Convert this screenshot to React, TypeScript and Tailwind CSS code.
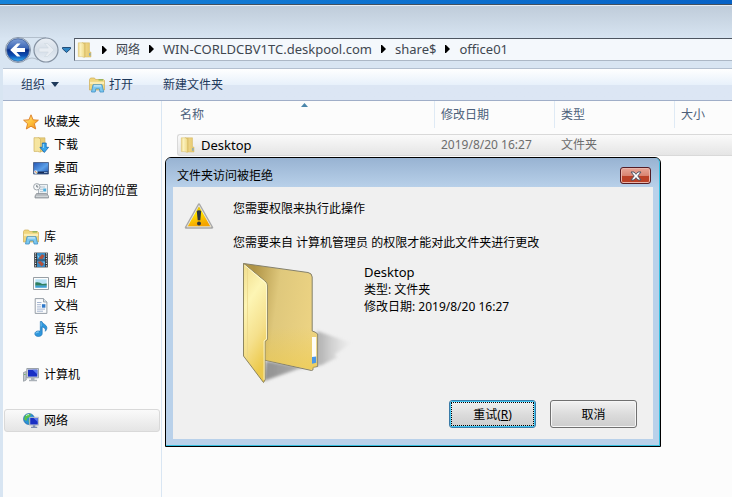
import type { ReactNode } from "react";

type IconProps = { className?: string };

function SmallFolder({ className = "h-4 w-4" }: IconProps) {
  return (
    <svg viewBox="0 0 16 16" className={className} aria-hidden="true">
      <defs>
        <linearGradient id="sf" x1="0" x2="1">
          <stop offset="0" stopColor="#eed88a" />
          <stop offset="0.35" stopColor="#fbf1bd" />
          <stop offset="1" stopColor="#efd988" />
        </linearGradient>
        <linearGradient id="sb" x1="0" x2="1">
          <stop offset="0" stopColor="#c9a94c" />
          <stop offset="0.5" stopColor="#ecd282" />
          <stop offset="1" stopColor="#e6c765" />
        </linearGradient>
      </defs>
      <path d="M5 .8h7.500V10H14v5H6z" fill="url(#sb)" stroke="#d5b865" strokeWidth="0.5" />
      <path d="M12.900 11v2.800" stroke="#5a9be0" strokeWidth="1" />
      <path d="M1.300.8h4.200L7.500 2.300v13L4.500 14.600H1.300z" fill="url(#sf)" stroke="#d8bd68" strokeWidth="0.5" />
    </svg>
  );
}

function LibraryFolder({ className = "h-4 w-4" }: IconProps) {
  return (
    <svg viewBox="0 0 16 16" className={className} aria-hidden="true">
      <path d="M.5 2.5 1.5 1h4l1 1.500h8l1 1V13H.5z" fill="#f0d67e" stroke="#cfae58" strokeWidth="0.7" />
      <path d="M1 4.800h14v2.200H1z" fill="#faedb4" />
      <path d="M9.500 2.900h4.500" stroke="#6fae4e" strokeWidth="1" />
      <path d="M2.500 15 4 7.700h9L14.700 15h-3.700l-.6-3.200H6.800L6.200 15z" fill="#7cc8f0" stroke="#3f8fc4" strokeWidth="0.8" />
      <path d="M4.800 8.900h7.400" stroke="#e2f5ff" strokeWidth="1" />
    </svg>
  );
}

function StarIcon() {
  return (
    <svg viewBox="0 0 16 16" className="h-4 w-4" aria-hidden="true">
      <defs>
        <linearGradient id="star" x1="0" y1="0" x2="1" y2="1">
          <stop offset="0" stopColor="#ffe9a0" />
          <stop offset="0.5" stopColor="#ffc23c" />
          <stop offset="1" stopColor="#f08a1c" />
        </linearGradient>
      </defs>
      <path
        d="M8 .8 10.1 5.8 15.4 6.2 11.4 9.7 12.7 15 8 12.2 3.3 15 4.6 9.7.6 6.2 5.9 5.8z"
        fill="url(#star)"
        stroke="#dc7d22"
        strokeWidth="0.9"
        strokeLinejoin="round"
      />
    </svg>
  );
}

function DownloadIcon() {
  return (
    <svg viewBox="0 0 16 16" className="h-4 w-4" aria-hidden="true">
      <path d="M5 .8h7v13.700H6z" fill="#e8cd78" stroke="#cdb062" strokeWidth="0.6" />
      <path d="M1 .7h4.500L7.500 2.200v13l-3-.8H1z" fill="#f6e5a0" stroke="#cfb25e" strokeWidth="0.7" />
      <path d="M9.300 6h3.900v4.300h2.400L11.300 15.500 6.900 10.300h2.400z" fill="#36a4ea" stroke="#1468b3" strokeWidth="0.8" />
      <path d="M10.300 7v4" stroke="#9bdcff" strokeWidth="1" />
    </svg>
  );
}

function DesktopIcon() {
  return (
    <svg viewBox="0 0 16 16" className="h-4 w-4" aria-hidden="true">
      <defs>
        <linearGradient id="desk" x1="0" y1="0" x2="1" y2="1">
          <stop offset="0" stopColor="#2455b3" />
          <stop offset="0.55" stopColor="#5b9fe8" />
          <stop offset="1" stopColor="#1d4ea8" />
        </linearGradient>
      </defs>
      <path d="M.5 2.500h15v11.500H.5z" fill="url(#desk)" stroke="#4b5f85" strokeWidth="0.9" />
      <path d="M1 11.500h14v2.100H1z" fill="#172c58" />
      <path d="M11 12.500h3.500" stroke="#a9c5e8" strokeWidth="0.8" />
      <circle cx="2.800" cy="12.100" r="1.900" fill="#d9eaf7" />
      <path d="M1.800 11.200h1v1h-1z" fill="#e25a33" />
      <path d="M3 12.200h1v1H3z" fill="#f0b02d" />
    </svg>
  );
}

function RecentIcon() {
  return (
    <svg viewBox="0 0 16 16" className="h-4 w-4" aria-hidden="true">
      <path d="M5.500 1.500h9v10.500h-9z" fill="#eef2f5" stroke="#9aa4ad" strokeWidth="0.8" />
      <path d="M7 4h5M7 6.300h3M7 8.600h3" stroke="#a5b8c8" strokeWidth="0.8" />
      <path d="M10.200 5.500h3v3h-3z" fill="#4fb1df" />
      <path d="M3.500 10.500h10l2 2.500v2H2v-2z" fill="#b3b8bd" stroke="#858b91" strokeWidth="0.7" />
      <path d="M3 13.300h12" stroke="#e9ecee" strokeWidth="0.7" />
      <circle cx="3.800" cy="3.800" r="3.200" fill="#f7f9fa" stroke="#979fa6" strokeWidth="0.9" />
      <path d="M3.800 1.900v2.100h1.500" stroke="#4e5961" strokeWidth="0.8" fill="none" />
    </svg>
  );
}

function VideoIcon() {
  return (
    <svg viewBox="0 0 16 16" className="h-4 w-4" aria-hidden="true">
      <path d="M1.200.6h13.600v14.800H1.200z" fill="#2b3036" />
      <path d="M4 1h8v6.600H4z" fill="#3e8fc7" />
      <path d="M4 8.400h8V15H4z" fill="#3989c4" />
      <path d="M5.500 6.800 9 2.200l2.600 1.600L9.400 6.900zM4.600 10l3-1 3.400 3-2.400 2.600z" fill="#b4513b" />
      <path d="M4.300 3l2 1.200-1 2zM9.800 9.500l2 .4-.3 2z" fill="#86cdf2" />
      <path d="M2.600 1.200v14M13.400 1.200v14" stroke="#e8ecef" strokeWidth="1.100" strokeDasharray="1.200 1.200" />
    </svg>
  );
}

function PictureIcon() {
  return (
    <svg viewBox="0 0 16 16" className="h-4 w-4" aria-hidden="true">
      <path d="M.5 2.500h15v12H.5z" fill="#fdfdfd" stroke="#8c949b" strokeWidth="0.9" />
      <path d="M2.300 4.300h11.400v8.400H2.300z" fill="#b9e2f6" />
      <path d="M2.300 7.600c3-1.200 5 .3 7.200 1.400l4.200-.6v2.400H2.300z" fill="#2f7f5f" />
      <path d="M2.300 10.600h11.400v2.100H2.300z" fill="#3f9fd2" />
    </svg>
  );
}

function DocumentIcon() {
  return (
    <svg viewBox="0 0 16 16" className="h-4 w-4" aria-hidden="true">
      <path d="M2.200.6h8.300l3.400 3.400v11.400H2.200z" fill="#fbfcfd" stroke="#8b949d" strokeWidth="0.9" />
      <path d="M10.500.6V4h3.400" fill="#dbe3ea" stroke="#8b949d" strokeWidth="0.8" />
      <path d="M4 4.500h4.500M4 6.700h4M4 8.900h4M4 11.100h8M4 13.200h6" stroke="#8fa2c4" strokeWidth="0.8" />
      <path d="M8.900 6.200h3.500v3.500H8.900z" fill="#2f78c9" />
    </svg>
  );
}

function MusicIcon() {
  return (
    <svg viewBox="0 0 16 16" className="h-4 w-4" aria-hidden="true">
      <path
        d="M7.300.5h1.600c.4 2.400 4.800 3 5 6.200.1 1.500-.7 2.700-1.600 3.600.5-2.500-.7-3.700-3.100-4.400v6.600c0 2-1.700 3-3.900 3-2.100 0-3.500-1.200-3.500-2.700 0-1.700 1.700-2.900 3.700-2.900.7 0 1.300.1 1.800.3z"
        fill="#2f97dc"
        stroke="#1a6eb2"
        strokeWidth="0.6"
      />
      <path d="M3 12.300c.5-1 1.600-1.400 2.800-1.300" stroke="#a8e0ff" strokeWidth="0.9" fill="none" />
      <path d="M8.100 1.400v4" stroke="#86cdf6" strokeWidth="0.7" />
    </svg>
  );
}

function ComputerIcon() {
  return (
    <svg viewBox="0 0 16 16" className="h-4 w-4" aria-hidden="true">
      <path d="M.5 5.500 3.200 4.500V13L.5 14.300z" fill="#c4cacf" stroke="#858d94" strokeWidth="0.7" />
      <path d="M1 7.500h1.600" stroke="#5fae52" strokeWidth="0.8" />
      <path d="M3.800 1.500h11.700v9.300H3.800z" fill="#d6dbe0" stroke="#878f97" strokeWidth="0.8" />
      <path d="M5 2.700h9.300v6.900H5z" fill="#1a2fc4" />
      <path d="M9.500 2.700h4.800v4.500z" fill="#5b78ec" />
      <path d="M8 10.800h3.500v2H14v1.500H6v-1.500h2z" fill="#aab1b8" />
    </svg>
  );
}

function NetworkIcon() {
  return (
    <svg viewBox="0 0 16 16" className="h-4 w-4" aria-hidden="true">
      <circle cx="6" cy="6" r="5.500" fill="#2b91d8" stroke="#1d5f9e" strokeWidth="0.6" />
      <path d="M2 2.800C4 1 6.500.7 8 1.500L6.500 4 4 5.500 3.500 8 1 6.500zM5.500 7l3-1-.5 4.500-2 .5z" fill="#58c24c" />
      <path d="M3 2.600c1-.8 2-1 3-1" stroke="#d9f7e3" strokeWidth="0.9" fill="none" />
      <path d="M6.500 4.300h9v7.900h-9z" fill="#d6dbe0" stroke="#a7afb8" strokeWidth="0.7" />
      <path d="M7.200 5h7.600v6.500H7.200z" fill="#1a2fc4" />
      <path d="M10.500 5h4.300v4z" fill="#5b78ec" />
      <path d="M9.800 12.200h2.500v1.600h1.900V15H8v-1.200h1.800z" fill="#7f8fb0" />
    </svg>
  );
}

function WarningIcon() {
  return (
    <svg viewBox="0 0 30 28" className="h-7 w-[30px] shrink-0" aria-hidden="true">
      <defs>
        <linearGradient id="warn" x1="0" y1="0" x2="0.3" y2="1">
          <stop offset="0" stopColor="#c99a10" />
          <stop offset="0.450" stopColor="#ffe200" />
          <stop offset="1" stopColor="#f5a400" />
        </linearGradient>
      </defs>
      <path d="M15 2.500 28 25.500H2z" fill="#d9d9d9" stroke="#a8a8a8" strokeWidth="2.500" strokeLinejoin="round" />
      <path d="M15 3.500 27 24.800H3z" fill="url(#warn)" stroke="#e9e9e4" strokeWidth="0.900" strokeLinejoin="round" />
      <path d="M12.800 9q2.200-1.600 4.400 0l-.9 9.200h-2.600z" fill="#2b3440" />
      <circle cx="15" cy="21.600" r="2" fill="#2b3440" />
    </svg>
  );
}

function BigFolder() {
  return (
    <svg viewBox="0 0 120 128" className="h-32 w-[120px] shrink-0" aria-hidden="true">
      <defs>
        <linearGradient id="back" x1="0" x2="1" y1="0" y2="0.200">
          <stop offset="0.150" stopColor="#b09446" />
          <stop offset="0.500" stopColor="#dfc87c" />
          <stop offset="1" stopColor="#ecd383" />
        </linearGradient>
        <linearGradient id="shine" x1="0" x2="0" y1="0" y2="1">
          <stop offset="0.550" stopColor="#f0c93c" stopOpacity="0" />
          <stop offset="1" stopColor="#efc83a" stopOpacity="0.500" />
        </linearGradient>
        <linearGradient id="front" x1="0" x2="0.300" y1="0" y2="1">
          <stop offset="0" stopColor="#f0dc8a" />
          <stop offset="0.350" stopColor="#fdf5b4" />
          <stop offset="0.700" stopColor="#f5e08c" />
          <stop offset="1" stopColor="#ecc94c" />
        </linearGradient>
        <linearGradient id="shade" gradientUnits="userSpaceOnUse" x1="24" x2="112" y1="0" y2="0">
          <stop offset="0" stopColor="#707070" stopOpacity="0.750" />
          <stop offset="0.650" stopColor="#8a8a8a" stopOpacity="0.550" />
          <stop offset="1" stopColor="#b5b5b5" stopOpacity="0" />
        </linearGradient>
        <filter id="soft" x="-20%" y="-20%" width="140%" height="140%">
          <feGaussianBlur stdDeviation="1.500" />
        </filter>
      </defs>
      <path d="M24 122 26 102 70 109 77 106V72L112 84 94 96 98 98 82 106 58 110z" fill="url(#shade)" filter="url(#soft)" />
      <path
        d="M3.500 4.500 68 13.500q4 .7 4.200 4.500V72q3 .7 5.500 3v32.500l-4.700.8v2.500l-1.500.7L24 101z"
        fill="url(#back)"
        stroke="#85816c"
        strokeWidth="1"
      />
      <path d="M24 15 67 14.500 71.500 72l5.500 3v32l-6 3.500L24 101z" fill="url(#shine)" />
      <path d="M72 78h4.200v25l-4.200 1.300z" fill="#fdfdf8" />
      <path d="M72 98l4.200-.6v6.400l-4.200 1z" fill="#4a97e8" />
      <path
        d="M3.500 4.500 24.500 21.500q3 2 3 5.500v53.500l-2.500 2v38.500l-1.500 2.500L3.500 97z"
        fill="url(#front)"
        stroke="#8d8662"
        strokeWidth="1"
      />
      <path d="M4.500 6 24 22.500q2.600 1.700 2.600 5V80l-2.500 1.800v39" fill="none" stroke="#fffbd6" strokeWidth="0.900" />
      <path d="M7.500 9V100" stroke="#ead58a" strokeWidth="1" opacity="0.700" />
    </svg>
  );
}

function NavButtons() {
  return (
    <svg viewBox="0 0 56 28" className="h-7 w-14" aria-hidden="true">
      <defs>
        <linearGradient id="nb" x1="0" x2="0" y1="0" y2="1">
          <stop offset="0" stopColor="#7f9fd6" />
          <stop offset="0.420" stopColor="#3c66b5" />
          <stop offset="0.500" stopColor="#082c86" />
          <stop offset="0.750" stopColor="#0c50b5" />
          <stop offset="1" stopColor="#38b6f6" />
        </linearGradient>
        <linearGradient id="nf" x1="0" x2="0" y1="0" y2="1">
          <stop offset="0" stopColor="#eaeff5" />
          <stop offset="0.500" stopColor="#d5dee8" />
          <stop offset="1" stopColor="#e9f0f7" />
        </linearGradient>
      </defs>
      <path d="M14 1.500h28M22 24q6-4 12 0" stroke="#b3bfcc" fill="none" />
      <circle cx="14" cy="14" r="12.500" fill="#e3ebf3" stroke="#8493a6" />
      <circle cx="14" cy="14" r="11.300" fill="url(#nb)" stroke="#3a5c96" strokeWidth="0.800" />
      <path d="M6.200 14 13 7.500h3.500L12.500 12H21v4h-8.500l4 4.500H13z" fill="#fff" />
      <circle cx="42" cy="14" r="12" fill="url(#nf)" stroke="#8592a2" strokeWidth="1.200" />
      <path d="M50 14 43.500 7.500h-3l3.800 4.500H35v4h9.300l-3.800 4.500h3z" fill="#e8edf3" stroke="#cdd6df" strokeWidth="0.600" />
    </svg>
  );
}

function Arrow() {
  return (
    <svg viewBox="0 0 5 8" className="h-2 w-[5px] shrink-0" aria-hidden="true">
      <path d="M0 0h1L5 4 1 8H0z" fill="#000" />
    </svg>
  );
}

function NavItem({
  icon,
  label,
  child = false,
  selected = false,
}: {
  icon: ReactNode;
  label: string;
  child?: boolean;
  selected?: boolean;
}) {
  const indent = child ? "pl-7" : "pl-[18px]";
  const look = selected
    ? "border-[#d9d9d9] bg-linear-to-b from-[#fafafa] to-[#e5e5e5]"
    : "border-transparent";
  return (
    <li>
      <button
        type="button"
        className={`flex h-[23px] w-full items-center gap-[5px] rounded-[3px] border text-left ${indent} ${look}`}
      >
        {icon}
        <span>{label}</span>
      </button>
    </li>
  );
}

function NavGroup({ children }: { children: ReactNode }) {
  return <ul className="mb-[23px]">{children}</ul>;
}

const crumbs = ["网络", "WIN-CORLDCBV1TC.deskpool.com", "share$", "office01"];

const headCell =
  "h-[27px] border-r border-[#dfeaf5] pl-1.5 text-left font-normal text-[#4c607a]";

function Dialog() {
  return (
    <section
      role="dialog"
      aria-labelledby="dialog-title"
      className="absolute top-[157px] left-[165px] w-[496px] rounded-t-md border border-black bg-[#b9d1ea]"
    >
      <div className="rounded-t-[5px] border-r border-b border-[#35bfe0] bg-linear-to-b from-[#98b3d2] to-[#b9d1ea] to-[30px] pr-1.5 pb-1.5 pl-[7px]">
        <header className="flex h-[29px] items-center justify-between pl-1">
          <h1 id="dialog-title" className="pt-1.5">
            文件夹访问被拒绝
          </h1>
          <button
            type="button"
            aria-label="关闭"
            className="mt-1.5 mr-0.5 flex h-[17px] w-[31px] items-center justify-center rounded-[3px] border border-[#551c24] bg-linear-to-b from-[#e8a697] from-0% via-[#d98573] via-50% to-[#c9705a] shadow-[inset_0_0_0_1px_#e9b5aa,inset_0_-7px_0_#bb4127]"
          >
            <svg viewBox="0 0 12 10" className="h-2.5 w-3" aria-hidden="true">
              <path
                d="M1 1h3l2 2.300L8 1h3L7.800 5 11 9H8L6 6.700 4 9H1l3.200-4z"
                fill="#fff"
                stroke="#535666"
                strokeWidth="1"
              />
            </svg>
          </button>
        </header>
        <div className="bg-[#f0f0f0] pt-[13px] pr-4 pb-[11px] pl-[11px] leading-[17px]">
          <div className="flex gap-[19px]">
            <div className="pt-0.5">
              <WarningIcon />
            </div>
            <div className="flex flex-col gap-[17px]">
              <p>您需要权限来执行此操作</p>
              <p>您需要来自 计算机管理员 的权限才能对此文件夹进行更改</p>
            </div>
          </div>
          <div className="flex gap-1 pt-2 pl-14">
            <BigFolder />
            <div className="pt-[5px]">
              <p className="text-[13px] leading-[17px]">Desktop</p>
              <p>类型: 文件夹</p>
              <p>修改日期: 2019/8/20 16:27</p>
            </div>
          </div>
          <div className="mt-[13px] flex justify-end gap-[14px]">
            <button
              type="button"
              className="h-7 w-[87px] rounded-[3px] border border-[#3b7ba8] bg-linear-to-b from-[#f2f2f2] from-0% via-[#dcdcdc] via-50% to-[#cdcdcd] p-px shadow-[inset_0_0_0_1px_#43c8f3]"
            >
              <span className="flex h-full items-center justify-center border border-dotted border-black">
                重试(<u>R</u>)
              </span>
            </button>
            <button
              type="button"
              className="h-7 w-[87px] rounded-[3px] border border-[#707070] bg-linear-to-b from-[#f2f2f2] from-0% via-[#dcdcdc] via-50% to-[#cdcdcd] shadow-[inset_0_0_0_1px_#f6f6f6]"
            >
              取消
            </button>
          </div>
        </div>
      </div>
    </section>
  );
}

export default function App() {
  return (
    <div className="relative flex min-h-screen flex-col overflow-hidden bg-[#d8e5f2] font-['Noto_Sans','Noto_Sans_CJK_SC',sans-serif] text-xs text-black">
      <div className="h-[5px] border-b border-[#45505c] bg-linear-to-r from-[#1683d9] to-[#0762c6]" />
      <div className="h-[33px] border-t border-[#e6edf4] bg-linear-to-b from-[#bfccda] to-[#d7e4f1]" />

      <nav aria-label="地址" className="flex h-[23px] items-center pl-1">
        <div className="flex w-[70px] shrink-0 items-center gap-0.5">
          <NavButtons />
          <svg viewBox="0 0 9 6" className="h-1.5 w-[9px]" aria-hidden="true">
            <path d="M.5.5h8v1.300L4.500 5.500.5 1.800z" fill="#2f86c4" stroke="#17426e" strokeWidth="0.900" />
          </svg>
        </div>
        <ol className="flex h-full flex-1 items-center gap-[9px] border border-r-0 border-t-[#4d5560] border-b-[#acb8c6] border-l-[#5f6975] bg-[#f4f8fc] pl-0.5 text-[#404750]">
          <li>
            <SmallFolder />
          </li>
          {crumbs.map((name, i) => (
            <li key={name} className="flex items-center gap-[9px]">
              <Arrow />
              <button type="button" className={i === 0 ? "" : "text-[13px]"}>
                {name}
              </button>
            </li>
          ))}
        </ol>
      </nav>

      <div
        role="toolbar"
        aria-label="工具栏"
        className="mt-[7px] ml-[3px] flex h-[33px] items-center border-t border-b border-t-[#b3c0d0] border-b-[#a0aec8] bg-linear-to-b from-[#ffffff] from-0% via-[#e8f1fb] via-50% to-[#dce6f4] to-50% pl-[18px] text-[#1e395b]"
      >
        <button type="button" className="flex w-[68px] items-center gap-1.5">
          组织
          <svg viewBox="0 0 8 5" className="h-[5px] w-2" aria-hidden="true">
            <path d="M0 0h8L4 5z" fill="#1e395b" />
          </svg>
        </button>
        <button type="button" className="flex w-[74px] items-center gap-1">
          <LibraryFolder />
          打开
        </button>
        <button type="button">新建文件夹</button>
      </div>

      <div className="ml-[3px] flex flex-1 bg-[#fcfcfc]">
        <nav aria-label="导航窗格" className="w-[159px] shrink-0 border-r border-[#d9e6f3] px-px pt-[9px]">
          <NavGroup>
            <NavItem icon={<StarIcon />} label="收藏夹" />
            <NavItem icon={<DownloadIcon />} label="下载" child />
            <NavItem icon={<DesktopIcon />} label="桌面" child />
            <NavItem icon={<RecentIcon />} label="最近访问的位置" child />
          </NavGroup>
          <NavGroup>
            <NavItem icon={<LibraryFolder />} label="库" />
            <NavItem icon={<VideoIcon />} label="视频" child />
            <NavItem icon={<PictureIcon />} label="图片" child />
            <NavItem icon={<DocumentIcon />} label="文档" child />
            <NavItem icon={<MusicIcon />} label="音乐" child />
          </NavGroup>
          <NavGroup>
            <NavItem icon={<ComputerIcon />} label="计算机" />
          </NavGroup>
          <ul>
            <NavItem icon={<NetworkIcon />} label="网络" selected />
          </ul>
        </nav>

        <main className="min-w-0 flex-1">
          <table className="w-full table-fixed border-separate border-spacing-0">
            <colgroup>
              <col className="w-[15px]" />
              <col className="w-[258px]" />
              <col className="w-[120px]" />
              <col className="w-[120px]" />
              <col />
            </colgroup>
            <thead>
              <tr>
                <td />
                <th scope="col" aria-sort="ascending" className={`${headCell} relative pl-[3px]`}>
                  名称
                  <svg viewBox="0 0 7 4" className="absolute top-0.5 left-[124px] h-1 w-[7px]" aria-hidden="true">
                    <path d="M3.500 0 7 4H0z" fill="#4a86ab" />
                  </svg>
                </th>
                <th scope="col" className={headCell}>
                  修改日期
                </th>
                <th scope="col" className={headCell}>
                  类型
                </th>
                <th scope="col" className="pl-1.5 text-left font-normal text-[#4c607a]">
                  大小
                </th>
              </tr>
            </thead>
            <tbody>
              <tr className="h-1.5">
                <td colSpan={5} />
              </tr>
              <tr className="text-[#6d6d6d]">
                <td />
                <td className="h-[22px] rounded-l-[3px] border-y border-l border-[#d9d9d9] bg-linear-to-b from-[#fafafa] to-[#e5e5e5] pl-0.5 text-[13px] leading-5 text-black">
                  <span className="flex items-center gap-[5px]">
                    <SmallFolder />
                    Desktop
                  </span>
                </td>
                <td className="border-y border-[#d9d9d9] bg-linear-to-b from-[#fafafa] to-[#e5e5e5] pl-1.5">
                  2019/8/20 16:27
                </td>
                <td className="border-y border-[#d9d9d9] bg-linear-to-b from-[#fafafa] to-[#e5e5e5] pl-1.5">文件夹</td>
                <td className="border-y border-[#d9d9d9] bg-linear-to-b from-[#fafafa] to-[#e5e5e5]" />
              </tr>
            </tbody>
          </table>
        </main>
      </div>

      <Dialog />
    </div>
  );
}
